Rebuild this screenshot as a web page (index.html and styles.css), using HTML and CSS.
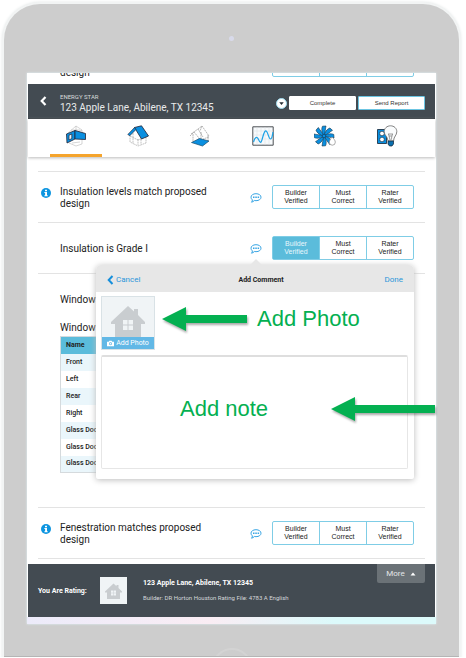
FILE: index.html
```html
<!DOCTYPE html>
<html lang="en">
<head>
<meta charset="utf-8">
<title>Energy Star rating</title>
<link rel="stylesheet" href="styles.css">
</head>
<body>
<svg class="defs" aria-hidden="true">
  <symbol id="info" viewBox="0 0 10 10"><circle cx="5" cy="5" r="5" fill="#0d95e0"/><path d="M4 1.700h2v1.500H4zM3.400 4H6v3.200h.7v1.100H3.400V7.200h.7V5h-.7z" fill="#fff"/></symbol>
  <symbol id="chat" viewBox="0 0 12 10"><path d="M6 .7c2.900 0 5 1.500 5 3.500S8.900 7.700 6 7.700c-.6 0-1.200-.1-1.700-.2C3.500 8.500 2.600 9 1.500 9.200c.6-.7.900-1.400.9-2.300C1.500 6.200 1 5.300 1 4.200 1 2.200 3.100.7 6 .7z" fill="#fff" stroke="#38a5e4" stroke-width="1"/><path d="M3 3.600h1.500v1.300H3zM5.300 3.600h1.500v1.300H5.300zM7.600 3.600h1.500v1.300H7.600z" fill="#38a5e4"/></symbol>
  <symbol id="home" viewBox="0 0 34 32"><path d="M17 1l6 5.500V4h4v6l7 7v2h-4v13H4V19H0v-2z" fill="#c9cdd0"/><path d="M12 15h4.500v4.500H12zM17.500 15H22v4.500h-4.500zM12 20.500h4.500V25H12zM17.500 20.500H22V25h-4.500z" fill="#f0f4f6"/></symbol>
</svg>
<div class="device">
  <div class="camera"></div>
  <main class="screen">
    <div class="peek">
      <span class="label">design</span>
      <div class="peek-box"><i></i><i></i><i></i></div>
    </div>
    <header class="bar">
      <button class="back" aria-label="Back"><svg viewBox="0 0 7 10"><path d="M5.500 1L1.700 5l3.800 4" fill="none" stroke="#fff" stroke-width="2.200"/></svg></button>
      <div class="heading">
        <p class="program">ENERGY STAR</p>
        <h1>123 Apple Lane, Abilene, TX 12345</h1>
      </div>
      <button class="drop" aria-label="Options"><svg viewBox="0 0 10 10"><path d="M2.500 3.500h5L5 6.800z" fill="#222c33"/></svg></button>
      <button class="action">Complete</button>
      <button class="action outlined">Send Report</button>
    </header>
    <nav class="tabs">
      <button class="tab active" aria-label="Walls"><svg viewBox="0 0 22 22"><path d="M3 8l8-7 6 4v14l-6 2-7-3M11 1v6M17 5l-6 3M6 5l9 0M7 18l8-1" fill="none" stroke="#bbb" stroke-width=".6"/><path d="M1.500 9L10 5.500V14L2 18z" fill="#0a8fe0" stroke="#223" stroke-width=".8"/><path d="M10 5.500l10.500 3v6L10 14z" fill="#0a8fe0" stroke="#223" stroke-width=".8"/><path d="M4 10.200l2.800-1.200v4.500L4 15z" fill="#e7f4fb" stroke="#223" stroke-width=".7"/></svg></button>
      <button class="tab" aria-label="Roof"><svg viewBox="0 0 22 22"><path d="M3 10v7l8 4 8-3v-6M11 14v6M3 11l8 4 8-3M6 8v10M14 14v5" fill="none" stroke="#aaa" stroke-width=".7" stroke-dasharray="2 .6"/><path d="M7.500 2.500L14.500.8 21.500 11l-7 3z" fill="#0a8fe0" stroke="#223" stroke-width=".8"/><path d="M7.500 2.500L.8 9.500l2 1.200 6-6z" fill="#0a8fe0" stroke="#223" stroke-width=".6"/></svg></button>
      <button class="tab" aria-label="Foundation"><svg viewBox="0 0 22 22"><path d="M2 9l7-5 4-3 7 10M4 9v7M9 4l5 8M13 1l-2 5M19 10v6M1 11l4-4 5 6v4M12 7v8M20 12l-6 2" fill="none" stroke="#888" stroke-width=".6" stroke-dasharray="2 .6"/><path d="M2.500 17.500l8-4 9.500 2.500-6.500 5z" fill="#0a8fe0" stroke="#174b6b" stroke-width=".7"/></svg></button>
      <button class="tab" aria-label="Performance"><svg viewBox="0 0 22 22"><path d="M.8 1.800h20.400v18.400H.8z" fill="#f7fafc" stroke="#4a4f53" stroke-width="1"/><path d="M5 2v18M9 2v18M13 2v18M17 2v18M1 6h20M1 10h20M1 14h20" stroke="#d8dfe3" stroke-width=".5"/><path d="M1.500 17C3 12 5 11 6.500 14.500S9 19 10.500 13s3-9 4.500-6 2 7 3.500 7 2-4 2.500-7" fill="none" stroke="#1ea2e6" stroke-width="1.200"/></svg></button>
      <button class="tab" aria-label="Ventilation"><svg viewBox="0 0 22 22"><g fill="#0a8fe0" stroke="#14384f" stroke-width=".6"><path id="b" d="M10 11C8 8.500 7 4 8.500 1.200l3.500-.2C11.300 3.500 11.500 7 10 11z"/><use href="#b" transform="rotate(45 10 11)"/><use href="#b" transform="rotate(90 10 11)"/><use href="#b" transform="rotate(135 10 11)"/><use href="#b" transform="rotate(180 10 11)"/><use href="#b" transform="rotate(225 10 11)"/><use href="#b" transform="rotate(270 10 11)"/><use href="#b" transform="rotate(315 10 11)"/><circle cx="10" cy="11" r="1.800"/></g><path d="M18 12c2 2 3.300 3.500 3.300 5.200a3 3 0 0 1-6 0c0-1.200 1.200-3.200 2.700-5.200z" fill="#fff" stroke="#888" stroke-width=".7"/></svg></button>
      <button class="tab" aria-label="Lighting"><svg viewBox="0 0 22 22"><path d="M1.500 4.500h9v14h-9z" fill="#0a8fe0" stroke="#123" stroke-width=".8"/><circle cx="6" cy="8.500" r="2.300" fill="#fff" stroke="#123" stroke-width=".6"/><circle cx="6" cy="14.500" r="2.300" fill="#fff" stroke="#123" stroke-width=".6"/><path d="M14.500.8c3.600 0 6.300 2.500 6.300 5.900 0 3.800-3 4.500-3.300 9.300h-5.500c-.3-4.800-3.800-5.500-3.800-9.300C8.200 3.300 11 .8 14.500.8z" fill="#fafcfd" stroke="#666" stroke-width=".8"/><path d="M12 9h5M12.500 9l1.500 6M16.500 9L15 15M13 11h3" fill="none" stroke="#777" stroke-width=".7"/><path d="M12 16h5.500v3l-1.500 2h-2.500L12 19z" fill="#0a6fae" stroke="#123" stroke-width=".7"/></svg></button>
    </nav>
    <section class="list">
      <div class="row">
        <svg class="info"><use href="#info"/></svg>
        <p class="label">Insulation levels match proposed design</p>
        <button class="comment" aria-label="Comment"><svg><use href="#chat"/></svg></button>
        <div class="segments"><button>Builder Verified</button><button>Must Correct</button><button>Rater Verified</button></div>
      </div>
      <div class="row">
        <span class="info"></span>
        <p class="label">Insulation is Grade I</p>
        <button class="comment" aria-label="Comment"><svg><use href="#chat"/></svg></button>
        <div class="segments"><button class="on">Builder Verified</button><button>Must Correct</button><button>Rater Verified</button></div>
      </div>
      <div class="windows">
        <p class="label">Windows</p>
        <p class="label second">Windows</p>
        <table>
          <thead><tr><th>Name</th></tr></thead>
          <tbody>
            <tr><td>Front</td></tr><tr><td>Left</td></tr><tr><td>Rear</td></tr><tr><td>Right</td></tr>
            <tr><td>Glass Door</td></tr><tr><td>Glass Door</td></tr><tr><td>Glass Door</td></tr>
          </tbody>
        </table>
      </div>
      <div class="row last">
        <svg class="info"><use href="#info"/></svg>
        <p class="label">Fenestration matches proposed design</p>
        <button class="comment" aria-label="Comment"><svg><use href="#chat"/></svg></button>
        <div class="segments"><button>Builder Verified</button><button>Must Correct</button><button>Rater Verified</button></div>
      </div>
    </section>
    <footer class="rating">
      <strong class="who">You Are Rating:</strong>
      <span class="thumb"><svg><use href="#home"/></svg></span>
      <div class="details">
        <strong>123 Apple Lane, Abilene, TX 12345</strong>
        <p>Builder: DR Horton Houston Rating File: 4783 A English</p>
      </div>
      <button class="more">More <svg viewBox="0 0 6 4"><path d="M3 .5L5.500 3.500h-5z" fill="#fff"/></svg></button>
    </footer>
    <div class="edge"></div>

    <section class="popover" aria-label="Add Comment">
      <header class="pop-bar">
        <button class="link"><svg viewBox="0 0 7 10"><path d="M5.500 1L1.700 5l3.800 4" fill="none" stroke="#168fdb" stroke-width="2"/></svg>Cancel</button>
        <h2>Add Comment</h2>
        <button class="link done">Done</button>
      </header>
      <div class="pop-body">
        <button class="photo">
          <svg class="house"><use href="#home"/></svg>
          <span class="caption"><svg viewBox="0 0 8 7"><path d="M0 1.500h2L2.700.3h2.600L6 1.500h2v5H0z" fill="#fff"/><circle cx="4" cy="3.800" r="1.700" fill="#62b8e6"/><circle cx="4" cy="3.800" r=".9" fill="#fff"/></svg>Add Photo</span>
        </button>
        <textarea aria-label="Note"></textarea>
      </div>
      <div class="hint photo-hint">
        <svg viewBox="0 0 85 24"><path d="M0 12L24 0v8h61v8H24v8z" fill="#04b051"/></svg>
        <span>Add Photo</span>
      </div>
      <div class="hint note-hint">
        <span>Add note</span>
        <svg viewBox="0 0 104 24"><path d="M0 12L24 0v8h80v8H24v8z" fill="#04b051"/></svg>
      </div>
    </section>
  </main>
  <div class="home-button"></div>
</div>
</body>
</html>
```
FILE: styles.css
```css
* { box-sizing: border-box; }
body { margin: 0; background: #fff; color: #222; font-family: Roboto, "Liberation Sans", sans-serif; overflow-x: hidden; }
p, h1, h2 { margin: 0; font-weight: 400; }
button { margin: 0; padding: 0; border: 0; background: none; color: inherit; font: inherit; cursor: pointer; }
svg { display: block; }
.defs { position: absolute; width: 0; height: 0; }

.device { margin: 4px 7px 0 4px; padding: 0 23px; background: #cdcdcd; border-radius: 36px 36px 0 0; border-bottom: 1px solid #b5b5b5; box-shadow: 0 0 0 2px #f2f4f4, 0 0 3px 2px #e2e6e6; }
.camera { height: 69px; display: flex; justify-content: center; align-items: center; }
.camera::before { content: ""; width: 5px; height: 5px; border-radius: 50%; background: #d8daea; }
.home-button { height: 32px; overflow: hidden; display: flex; justify-content: center; padding-top: 24px; }
.home-button::before { content: ""; flex: none; width: 36px; height: 36px; border: 2px solid #d3d3d3; border-radius: 50%; }

.screen { position: relative; background: #fff; padding: 0 1px; box-shadow: 0 0 2px #e4f4fa; }
.label { font-size: 10px; line-height: 12px; }

.peek { height: 11px; overflow: hidden; display: flex; justify-content: space-between; align-items: flex-end; padding: 0 21px 5px 32px; }
.peek-box { display: flex; width: 142px; height: 24px; margin-bottom: 2px; border: 1px solid #7fcde6; border-radius: 2px; }
.peek-box i { flex: 1; }
.peek-box i + i { border-left: 1px solid #7fcde6; }

.bar { height: 35px; display: flex; align-items: center; padding: 4px 10px 0 12px; background: #434b52; border-bottom: 1px solid #30373d; color: #fff; }
.back { width: 20px; padding-bottom: 4px; }
.back svg { width: 7px; height: 10px; }
.heading { flex: 1; }
.program { font-size: 6px; line-height: 9px; color: #d8dbdd; }
.bar h1 { font-size: 10px; line-height: 13px; color: #e8eaeb; white-space: nowrap; }
.drop { width: 11px; height: 11px; margin: 0 2px 0 0; border: 1px solid #9fdcf0; border-radius: 50%; background: #fff; }
.drop svg { width: 9px; height: 9px; }
.action { width: 67px; height: 14px; border: 1px solid #fff; border-radius: 1px; background: #fff; color: #333; font: 6px/12px "Liberation Sans", sans-serif; }
.action + .action { margin-left: 2px; }
.outlined { border-color: #6cc5e2; }

.tabs { height: 38px; display: flex; padding: 0 17px; box-shadow: 0 1px 3px #bbb; }
.tab { flex: 1; display: flex; justify-content: center; padding-top: 6px; position: relative; }
.tab svg { width: 22px; height: 22px; }
.active::after { content: ""; position: absolute; left: 5px; right: 5px; bottom: 0; height: 3px; background: #f5a42c; }

.list { padding: 14px 10px 5px; }
.row { height: 51px; display: flex; align-items: center; border-top: 1px solid #e3e3e3; }
.info { width: 10px; height: 10px; margin: 0 9px 8px 3px; }
.row .label { width: 160px; padding-top: 2px; }
.comment { margin-left: auto; padding-top: 2px; }
.comment svg { width: 12px; height: 10px; }
.segments { width: 142px; height: 24px; display: flex; margin: 0 11px 0 10px; border: 1px solid #7fcde6; border-radius: 2px; }
.segments button { flex: 1; padding: 0 6px; font: 7px/8px "Liberation Sans", sans-serif; }
.segments button + button { border-left: 1px solid #7fcde6; }
.segments .on { background: #5bbcdb; color: #e8f7fc; }
.last { height: 52px; border-bottom: 1px solid #e3e3e3; }

.windows { height: 234px; padding: 20px 21px 0 22px; border-top: 1px solid #e3e3e3; }
.second { margin: 16px 0 2px; }
table { width: 100%; border-collapse: collapse; border: 1px solid #d5dadd; font-size: 7px; text-align: left; }
th, td { height: 17px; padding: 0 5px; line-height: 9px; font-weight: 500; }
th { background: #5bbcdb; font-weight: 700; }
tbody tr:nth-child(odd) { background: #eaf6fb; }

.rating { height: 53px; display: flex; align-items: center; padding: 0 10px; background: #434b52; color: #fff; font-size: 7px; }
.who { width: 62px; white-space: nowrap; }
.thumb { width: 27px; height: 27px; display: grid; place-items: center; background: #f0f4f6; }
.thumb svg { width: 17px; height: 16px; }
.details { flex: 1; margin-left: 16px; white-space: nowrap; }
.details strong { display: block; line-height: 12px; }
.details p { margin-top: 3px; font-size: 6px; line-height: 12px; color: #d5d8da; }
.more { align-self: flex-start; width: 48px; height: 19px; display: flex; justify-content: center; align-items: center; gap: 5px; border-radius: 0 0 2px 2px; background: #6b7277; color: #e4e6e7; font-size: 8px; }
.more svg { width: 6px; height: 4px; }
.edge { height: 7px; margin: 0 -1px; background: linear-gradient(90deg, #ecebfa, #faedf4 45%, #dcfafb 75%, #dcfafb); }

.popover { position: absolute; left: 69px; right: 22px; top: 192px; background: #fff; border-radius: 5px 5px 2px 2px; box-shadow: 0 1px 6px #bbb; }
.popover::before { content: ""; position: absolute; left: 154px; top: -6px; border: 6px solid transparent; border-top: 0; border-bottom-color: #e7e7e7; }
.pop-bar { height: 27px; display: grid; grid-template-columns: 1fr auto 1fr; align-items: center; padding: 2px 11px 0; background: #e7e7e7; border-radius: 5px 5px 0 0; }
.link { display: flex; align-items: center; gap: 2px; color: #2a96da; font-size: 8px; }
.link svg { width: 7px; height: 10px; }
.done { justify-self: end; }
.pop-bar h2 { margin-left: 12px; font-size: 7px; font-weight: 700; }
.pop-body { padding: 4px 6px 10px 5px; }
.photo { display: flex; flex-direction: column; align-items: center; justify-content: flex-end; width: 54px; height: 54px; border: 1px solid #d9e2e6; background: #f0f4f6; }
.house { width: 34px; height: 32px; flex: none; }
.caption { width: 100%; height: 12px; display: flex; align-items: center; justify-content: center; gap: 2px; background: #62b8e6; color: #fff; font-size: 7px; white-space: nowrap; }
.caption svg { width: 7px; height: 7px; }
textarea { display: block; width: 100%; height: 114px; margin-top: 5px; border: 1px solid #e6e6e6; border-top: 2px solid #dedede; border-radius: 2px; resize: none; outline: 0; }
.hint { position: absolute; display: flex; align-items: center; color: #04b051; font: 22px/24px "Liberation Sans", sans-serif; pointer-events: none; white-space: nowrap; }
.hint svg { height: 24px; filter: drop-shadow(1px 2px 1px #0005); }
.photo-hint { left: 66px; top: 42px; gap: 10px; }
.photo-hint svg { width: 85px; }
.note-hint { left: 84px; right: -21px; top: 132px; justify-content: space-between; }
.note-hint svg { width: 104px; }
```
